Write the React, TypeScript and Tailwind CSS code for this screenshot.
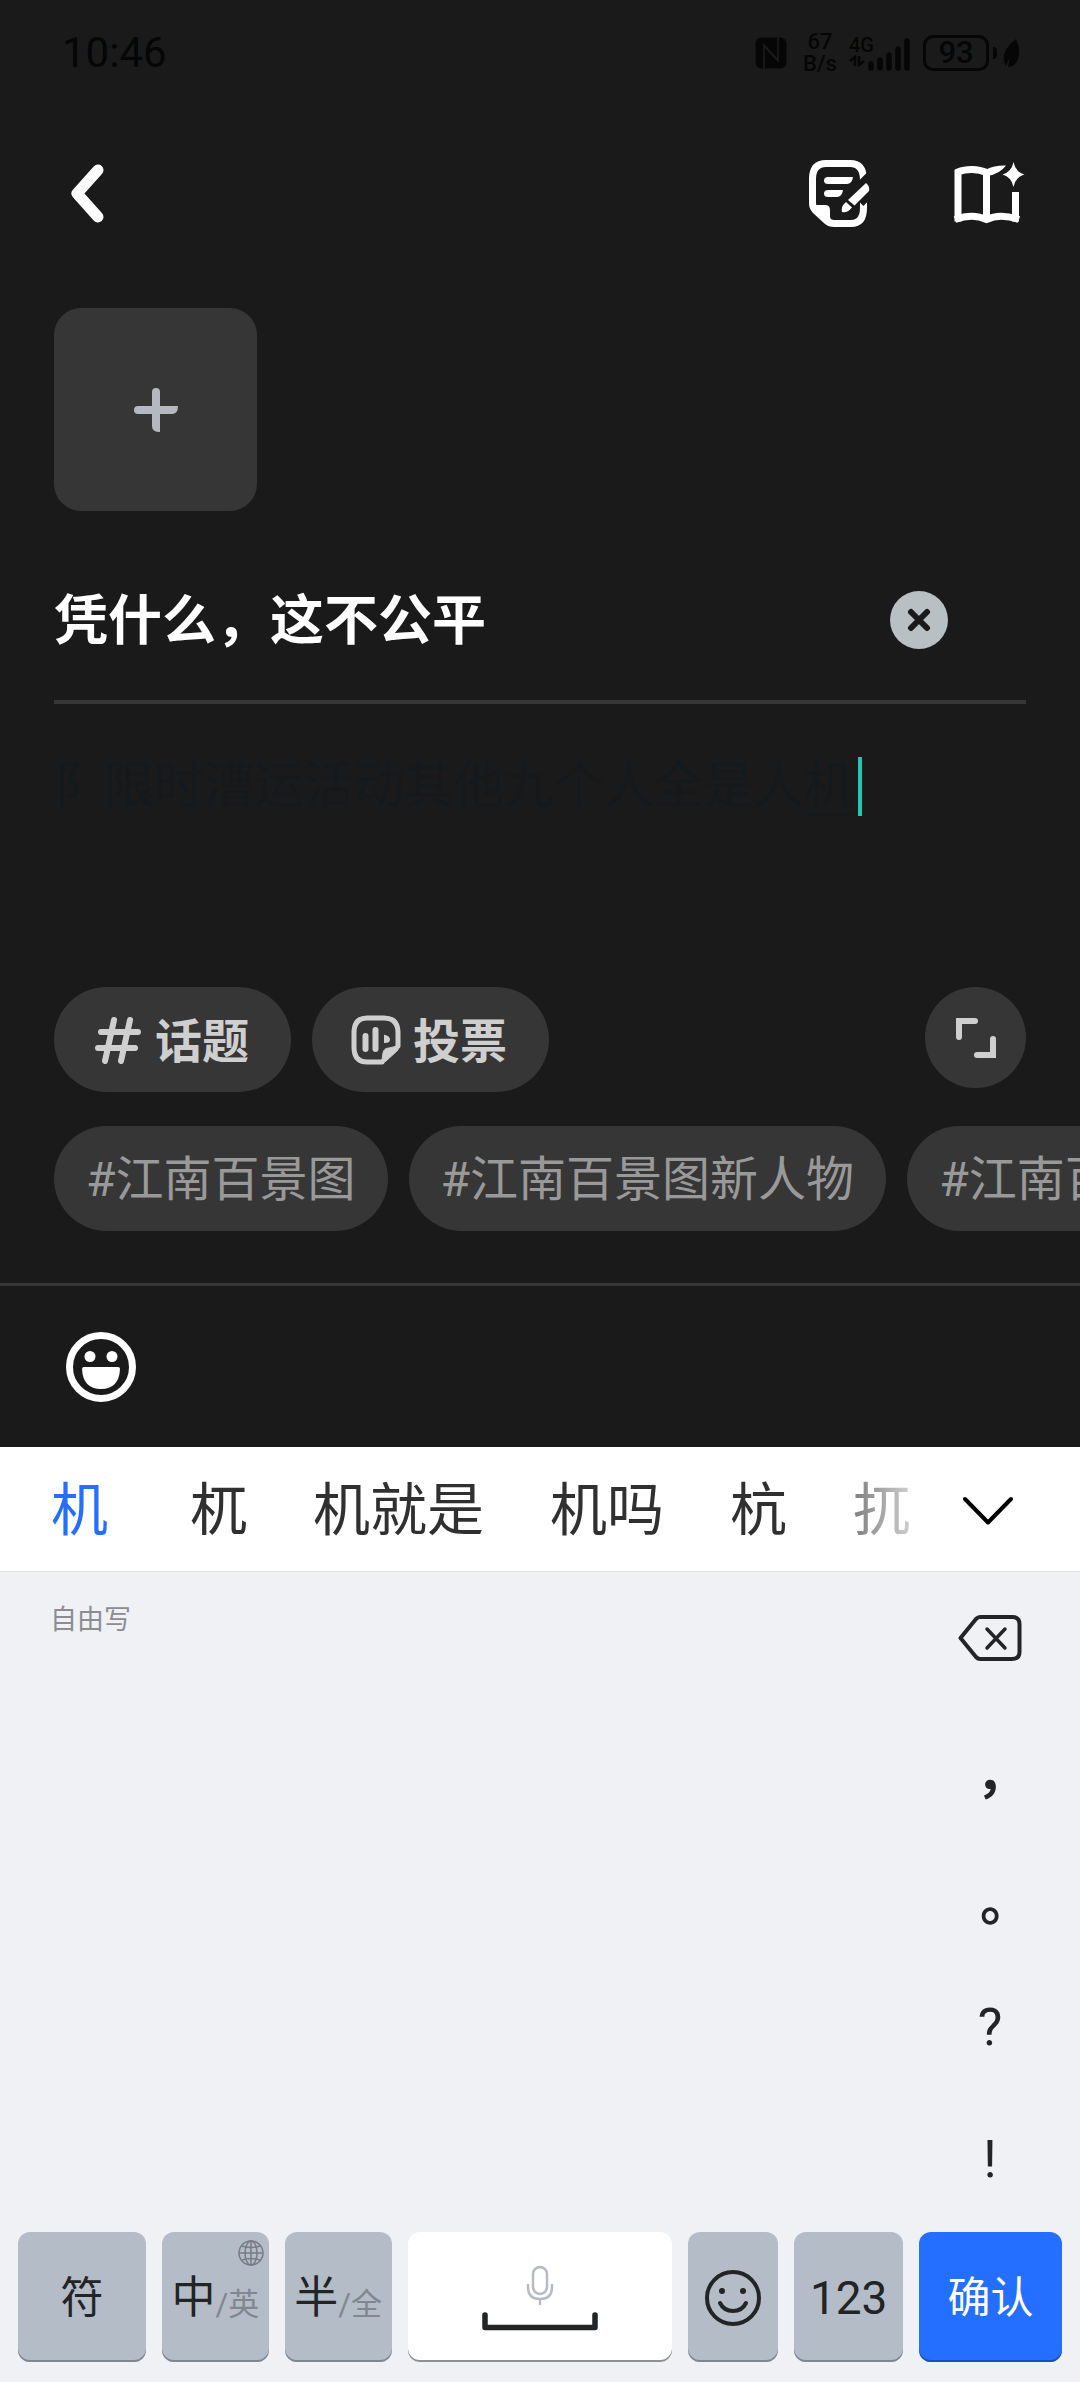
import { useState } from "react";
import type { ReactNode } from "react";

const candidates = ["机", "杌", "机就是", "机吗", "杭", "扤"];
const tags = ["#江南百景图", "#江南百景图新人物", "#江南百景图"];

function StatusBar() {
  return (
    <div className="flex h-[105px] items-center justify-between pr-[59px] pl-[62px] text-[#060606]">
      <time className="text-[42px] leading-none">10:46</time>

      <div className="flex items-center">
        {/* NFC */}
        <svg width="32" height="32" viewBox="0 0 32 32" fill="currentColor" aria-label="NFC">
          <rect x="0.500" y="0.500" width="31" height="31" rx="6" />
          <path d="M9 32 V8 L22 22 M23 0 V24 L10 10" fill="none" stroke="#1a1a1a" strokeWidth="1.800" />
        </svg>
        <div className="ml-4 w-[34px] text-center text-[22px] leading-[22px] font-medium">
          <div>67</div>
          <div>B/s</div>
        </div>
        <div className="ml-[12px] flex items-end">
          <div className="-mr-6 h-[36px] w-[42px]">
            <div className="text-[20px] leading-5 font-medium">4G</div>
            <svg width="16" height="12" viewBox="0 0 16 12" fill="none" stroke="currentColor" strokeWidth="2.500">
              <path d="M6 11 V2 L1 6 M10 1 V10 L15 6" />
            </svg>
          </div>
          <svg width="44" height="34" viewBox="0 0 44 34" fill="none" stroke="currentColor" strokeWidth="5.500" strokeLinecap="round">
            <path d="M4 27 V31 M13 23 V31 M22 18 V31 M31 12 V31 M40 4 V31" />
          </svg>
        </div>
        <div className="ml-3 flex h-[36px] w-[66px] items-center justify-center rounded-[10px] border-3 border-current text-[31px] leading-none font-medium">
          93
        </div>
        <div className="ml-1 h-3 w-1 rounded-r bg-current" />
        <svg className="ml-1" width="20" height="30" viewBox="0 0 20 30" fill="currentColor">
          <path d="M15 1 Q20 12 17 21 Q15 28 7 29 L9 18 L5 28 Q1 22 4 14 Q7 7 15 1 Z" />
        </svg>
      </div>
    </div>
  );
}

function NavBar() {
  return (
    <nav className="flex h-[176px] items-center pt-0.5 pr-[53px] pl-[71px] text-white">
      <button type="button" aria-label="返回">
        <svg width="34" height="60" viewBox="0 0 34 60" fill="none" stroke="currentColor" strokeWidth="11" strokeLinecap="round" strokeLinejoin="round">
          <path d="M27 6 L6 29.500 L27 53" />
        </svg>
      </button>
      <button type="button" aria-label="草稿" className="ml-auto">
        <svg width="62" height="68" viewBox="0 0 62 68" fill="none">
          <path
            d="M54.500 46 V48 Q54.500 63.500 42 63.500 H25 Q21 63.500 18 61 L6 50 Q3.500 47 3.500 43 V19 Q3.500 3.500 17 3.500 H41 Q54.500 3.500 54.500 20 Z"
            stroke="white"
            strokeWidth="7"
          />
          <path d="M5 45 H16 Q21 45 21 50 V57 Q22 61 28 63 H20 L4 49 Z" fill="white" />
          <path d="M47 38.500 L66 19.500" stroke="#1a1a1a" strokeWidth="21" />
          <path d="M19 17 H44 Q43 24 38 24 H19 Q15 24 15 20.500 Q15 17 19 17 Z M19 30 H34 Q33 37 28 37 H19 Q15 37 15 33.500 Q15 30 19 30 Z" fill="white" />
          <path d="M57 23 Q61 26 60 31 L45.500 45.500 L39 40 Z M37 42 L43 47.500 L40 50.500 Q37 53 33 52 Q32 47 35 44 Z" fill="white" />
        </svg>
      </button>
      <button type="button" aria-label="灵感" className="ml-[81px]">
        <svg width="75" height="68" viewBox="0 0 75 68" fill="none" stroke="currentColor" strokeWidth="7">
          <path d="M6 61.500 V12 C14 8.500 26 8.500 34.500 12.500 V58.500 M63.500 32 V61.500" />
          <path d="M3 59.500 C14 55.500 26 55.500 34.500 59.500 C43 55.500 55 55.500 67 59.500" />
          <path d="M34 9.500 Q43 5 54 5.500 Q48 14 35 16 Z" fill="currentColor" stroke="none" />
          <path d="M61.500 2 Q63.500 12 72.500 14.500 Q63.500 17 61.500 27 Q59.500 17 50.500 14.500 Q59.500 12 61.500 2 Z" fill="currentColor" stroke="none" />
        </svg>
      </button>
    </nav>
  );
}

function ActionButton({ icon, children }: { icon: ReactNode; children: ReactNode }) {
  return (
    <button type="button" className="flex h-[105px] items-center gap-3 rounded-full bg-[#363636] pr-[42px] pl-[39px] text-[47px] leading-none font-bold text-[#cfcfcf]">
      {icon}
      <span className="pt-1">{children}</span>
    </button>
  );
}

function HashIcon() {
  return (
    <svg width="50" height="50" viewBox="0 0 50 50" fill="none" stroke="currentColor" strokeWidth="6" strokeLinecap="round">
      <path d="M21 5 L12 46 M37 5 L28 46 M8 17 H45 M5 33 H42" />
    </svg>
  );
}

function VoteIcon() {
  return (
    <svg width="50" height="50" viewBox="0 0 50 50" fill="none" stroke="currentColor" strokeWidth="5" strokeLinecap="round">
      <path d="M47 31 V18 Q47 3 33 3 H16 Q3 3 3 18 V32 Q3 47 16 47 H31" />
      <path d="M14.500 21 V34 M24.500 15 V34" strokeWidth="6" />
      <path d="M34 21 Q38 22 38 24.500 Q38 27 34 27 Z" fill="currentColor" strokeWidth="2" />
      <path d="M29 48 Q32 44 32 38 Q33 33 38 33 Q45 32 48 29 Q49 33 46 36 L35 46 Q32 49 29 48 Z" fill="currentColor" strokeWidth="1" />
    </svg>
  );
}

function Editor() {
  const [title, setTitle] = useState("凭什么，这不公平");
  const [body, setBody] = useState("阝限时漕运活动其他九个人全是人机");

  return (
    <main className="pt-[27px]">
      <div className="px-[54px]">
        <button type="button" aria-label="添加图片" className="flex size-[203px] items-center justify-center rounded-[27px] bg-[#363636]">
          <svg width="44" height="44" viewBox="0 0 44 44" fill="#b4b8c0">
            <path d="M18 4 Q18 0 22 0 Q26 0 26 4 V18 H44 Q44 26 38 26 H26 V44 Q18 44 18 38 V26 H4 Q0 26 0 22 Q0 18 4 18 H18 Z" />
          </svg>
        </button>

        <div className="mt-[29px] flex h-[164px] items-center border-b-4 border-[#363636] pr-[78px]">
          <input
            aria-label="标题"
            className="min-w-0 flex-1 bg-transparent pt-1 text-[54px] leading-[80px] font-bold text-white outline-none"
            value={title}
            onChange={(e) => setTitle(e.target.value)}
          />
          <button type="button" aria-label="清空标题" onClick={() => setTitle("")} className="flex size-[58px] items-center justify-center rounded-full bg-[#b8c0c4]">
            <svg width="24" height="24" viewBox="0 0 24 24" stroke="#1a1a1a" strokeWidth="6" strokeLinecap="round">
              <path d="M4 4 L20 20 M20 4 L4 20" />
            </svg>
          </button>
        </div>

        <div className="mt-[53px] flex h-[230px] items-start">
          <div className="relative flex">
            <textarea
              aria-label="正文"
              rows={1}
              className="field-sizing-content resize-none overflow-hidden bg-transparent pr-1 text-[50px] leading-[59px] whitespace-nowrap text-[#16191b] outline-none"
              value={body}
              onChange={(e) => setBody(e.target.value)}
            />
            <div className="absolute right-1 bottom-0 h-[2px] w-[48px] bg-[#16191b]" />
          </div>
          <div className="h-[59px] w-1 bg-[#1fc8b0]" />
        </div>

        <div className="flex items-start gap-[21px]">
          <ActionButton icon={<HashIcon />}>话题</ActionButton>
          <ActionButton icon={<VoteIcon />}>投票</ActionButton>
          <button type="button" aria-label="全屏" className="ml-auto flex size-[101px] items-center justify-center rounded-full bg-[#363636]">
            <svg width="42" height="42" viewBox="0 0 42 42" fill="none" stroke="#cfcfcf" strokeWidth="6" strokeLinecap="round">
              <path d="M4 20 V4 H20 M38 22 V38 H22" />
            </svg>
          </button>
        </div>
      </div>

      <div className="mt-[34px] flex gap-[21px] overflow-hidden pl-[54px]">
        {tags.map((tag, index) => (
          <button key={index} type="button" className="h-[105px] shrink-0 rounded-full bg-[#363636] px-8 pt-0.5 text-[48px] leading-none whitespace-nowrap text-[#999999]">
            {tag}
          </button>
        ))}
      </div>

      <div className="mt-[52px] flex h-[164px] items-center border-t-3 border-[#363636] px-[66px]">
        <button type="button" aria-label="表情">
          <svg width="70" height="70" viewBox="0 0 70 70" fill="white">
            <circle cx="35" cy="35" r="31.500" fill="none" stroke="white" strokeWidth="7" />
            <circle cx="24" cy="24.500" r="5.500" />
            <circle cx="46" cy="24.500" r="5.500" />
            <path d="M18 35 H52 Q54 35 54 37 Q53 57 35 57 Q17 57 16 37 Q16 35 18 35 Z" />
          </svg>
        </button>
      </div>
    </main>
  );
}

function CandidateBar() {
  return (
    <div className="flex h-[125px] items-center border-b border-[#e0e2e4] bg-white pt-1">
      <div className="flex min-w-0 flex-1 gap-[66px] overflow-hidden pl-[51px] [mask-image:linear-gradient(to_right,black_calc(100%-148px),transparent)]">
        {candidates.map((word, index) => (
          <button
            key={word}
            type="button"
            className={
              index === 0
                ? "mr-4 shrink-0 text-[57px] leading-[80px] text-[#246fff]"
                : "shrink-0 text-[57px] leading-[80px] whitespace-nowrap text-[#303030]"
            }
          >
            {word}
          </button>
        ))}
      </div>
      <button type="button" aria-label="更多候选" className="w-[135px] pl-[18px]">
        <svg width="50" height="30" viewBox="0 0 50 30" fill="none" stroke="black" strokeWidth="4" strokeLinecap="round" strokeLinejoin="round">
          <path d="M2 3 L25 26.500 L48 3" />
        </svg>
      </button>
    </div>
  );
}

function Key({ className = "", label, children }: { className?: string; label?: string; children: ReactNode }) {
  return (
    <button
      type="button"
      aria-label={label}
      className={`relative flex h-[130px] items-center justify-center rounded-xl pt-0.5 ${className || "bg-[#b4bcc8] text-[#222426] shadow-[inset_0_-2px_0_#80868f]"}`}
    >
      {children}
    </button>
  );
}

function Keyboard() {
  return (
    <section className="flex flex-1 flex-col bg-[#eff1f5]">
      <div className="flex min-h-[660px] flex-1 items-start justify-between pt-[30px] pr-[54px] pl-[50px]">
        <span className="text-[27px] leading-[36px] text-[#8c8d91]">自由写</span>
        <div className="flex w-[72px] flex-col items-center text-[52px] leading-none text-[#222426]">
          <button type="button" aria-label="删除" className="flex h-[72px] items-center">
            <svg width="64" height="48" viewBox="0 0 64 48" fill="none" stroke="currentColor" strokeWidth="4" strokeLinecap="round" strokeLinejoin="round">
              <path d="M22 3 H54 Q61.500 3 61.500 10 V38 Q61.500 45 54 45 H22 Q20 45 18 43 L2.500 24 L18 5 Q20 3 22 3 Z" />
              <path d="M29 15 L47 34 M47 15 L29 34" strokeWidth="3.500" />
            </svg>
          </button>
          <div lang="zh-TW" className="mt-12 flex flex-col font-['Noto_Sans_CJK_TC',sans-serif] font-bold">
            <button type="button" className="h-32">，</button>
            <button type="button" className="h-32">。</button>
          </div>
          <button type="button" className="mt-0.5 h-24">?</button>
          <button type="button" className="mt-5 h-32">!</button>
        </div>
      </div>

      <div className="grid grid-cols-[128fr_107fr_107fr_265fr_90fr_109fr_143fr] gap-4 px-[18px] pb-5">
        <Key>
          <span className="text-[43px] leading-none">符</span>
        </Key>
        <Key>
          <span className="text-[44px] leading-none">中</span>
          <span className="pt-3 text-[31px] leading-none text-[#82878f]">/英</span>
          <svg className="absolute top-2 right-[5px]" width="26" height="26" viewBox="0 0 26 26" fill="none" stroke="#777c85" strokeWidth="1.500">
            <circle cx="13" cy="13" r="12" />
            <ellipse cx="13" cy="13" rx="6" ry="12" />
            <path d="M13 1 V25 M1 13 H25 M4 6 Q13 9 22 6 M4 20 Q13 17 22 20" />
          </svg>
        </Key>
        <Key>
          <span className="text-[44px] leading-none">半</span>
          <span className="pt-3 text-[31px] leading-none text-[#82878f]">/全</span>
        </Key>
        <Key label="空格" className="bg-white text-[#222426] shadow-[inset_0_-2px_0_#8f9093]">
          <svg width="116" height="66" viewBox="0 0 116 66" fill="none" strokeLinecap="round" strokeLinejoin="round">
            <g stroke="#b7bac1" strokeWidth="2.500">
              <rect x="51" y="2" width="14" height="27" rx="7" />
              <path d="M46 20 V22 Q46 34 58 34 Q70 34 70 22 V20 M58 34 V39" />
            </g>
            <path d="M3 50 V62.500 H113 V50" stroke="#222426" strokeWidth="5.500" />
          </svg>
        </Key>
        <Key label="表情">
          <svg width="56" height="56" viewBox="0 0 56 56" fill="none" stroke="currentColor" strokeWidth="4" strokeLinecap="round">
            <circle cx="28" cy="28" r="26" />
            <circle cx="17" cy="21" r="3" fill="currentColor" stroke="none" />
            <circle cx="38" cy="21" r="3" fill="currentColor" stroke="none" />
            <path d="M15 33 Q19 41 28 41 Q37 41 41 33" />
          </svg>
        </Key>
        <Key>
          <span className="text-[46px] leading-none">123</span>
        </Key>
        <Key className="bg-[#246fff] text-white shadow-[inset_0_-2px_0_#1c4fb5]">
          <span className="text-[43px] leading-none">确认</span>
        </Key>
      </div>
    </section>
  );
}

export default function App() {
  return (
    <div lang="zh-CN" className="flex min-h-screen flex-col bg-[#1a1a1a] font-[Roboto,'Noto_Sans_CJK_SC',sans-serif]">
      <StatusBar />
      <NavBar />
      <Editor />
      <CandidateBar />
      <Keyboard />
    </div>
  );
}
